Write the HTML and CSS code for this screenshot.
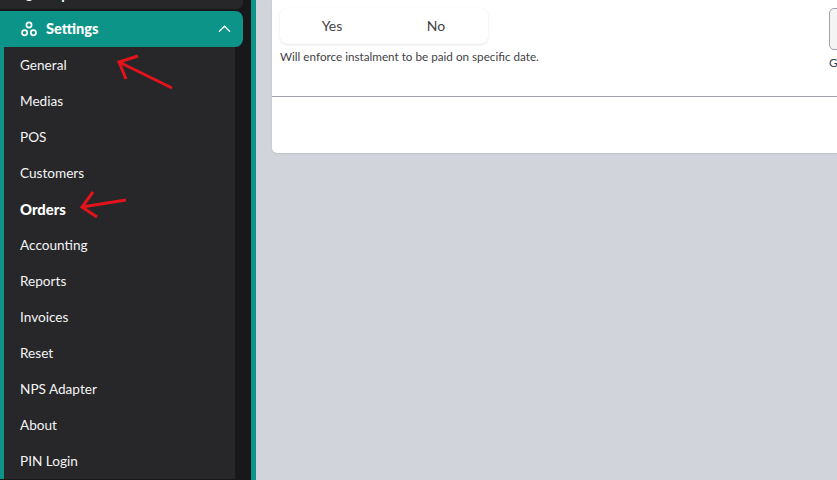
FILE: index.html
```html
<!DOCTYPE html>
<html lang="en">
<head>
<meta charset="UTF-8">
<meta name="viewport" content="width=device-width, initial-scale=1.0">
<title>Settings - Orders</title>
<link rel="stylesheet" href="styles.css">
</head>
<body>
<div class="layout">
    <aside class="sidebar">
        <div class="menu-prev">
            <svg class="menu-prev__icon" viewBox="0 0 16 16" fill="none" stroke="#fff" stroke-width="1.6">
                <circle cx="8" cy="8" r="6"/>
            </svg>
            <span class="menu-prev__label">Expenses</span>
        </div>
        <div class="menu-active">
            <svg class="menu-active__icon" viewBox="0 0 16 16" fill="none" stroke="#fff" stroke-width="1.7">
                <circle cx="8" cy="4" r="2.6"/>
                <circle cx="3.6" cy="11.8" r="2.6"/>
                <circle cx="12.4" cy="11.8" r="2.6"/>
            </svg>
            <span class="menu-active__label">Settings</span>
            <svg class="menu-active__chevron" viewBox="0 0 14 8" fill="none" stroke="#fff" stroke-width="1.3">
                <path d="M1 7l6-6 6 6"/>
            </svg>
        </div>
        <ul class="submenu">
            <li>General</li>
            <li>Medias</li>
            <li>POS</li>
            <li>Customers</li>
            <li class="current">Orders</li>
            <li>Accounting</li>
            <li>Reports</li>
            <li>Invoices</li>
            <li>Reset</li>
            <li>NPS Adapter</li>
            <li>About</li>
            <li>PIN Login</li>
        </ul>
    </aside>
    <main class="content">
        <section class="card">
            <div class="card__fields">
                <div class="field">
                    <div class="switch">
                        <span>Yes</span>
                        <span>No</span>
                    </div>
                    <p class="field__hint">Will enforce instalment to be paid on specific date.</p>
                </div>
                <div class="field field--cut">
                    <div class="input-box"></div>
                    <p class="field__hint">Gateway</p>
                </div>
            </div>
            <div class="card__footer"></div>
        </section>
    </main>
</div>
<svg class="arrow arrow--general" viewBox="0 0 62 40" fill="none" stroke="#e3131b" stroke-width="3">
    <path d="M57 36L4 10M23 4L4 10l7 17"/>
</svg>
<svg class="arrow arrow--orders" viewBox="0 0 52 33" fill="none" stroke="#e3131b" stroke-width="3">
    <path d="M48 12L4 19M15 4L4 19l15 10"/>
</svg>
</body>
</html>
```

FILE: styles.css
```css
* {
    box-sizing: border-box;
}
body {
    margin: 0;
    height: 480px;
    overflow: hidden;
    font-family: Lato, Arial, sans-serif;
    background-color: #d1d5db;
}
.layout {
    display: flex;
    height: 480px;
}
.sidebar {
    width: 256px;
    flex-shrink: 0;
    overflow: hidden;
    background-color: #18181b;
    border-right: 5px solid #0d9488;
}
.menu-prev {
    height: 9px;
    width: 243px;
    background-color: #27272a;
    border-bottom-right-radius: 6px;
    overflow: hidden;
    display: flex;
    align-items: flex-end;
    padding-left: 23px;
}
.menu-prev__icon {
    width: 12px;
    height: 12px;
    flex-shrink: 0;
    margin-bottom: 7px;
}
.menu-prev__label {
    color: #fff;
    font-weight: 700;
    font-size: 14px;
    line-height: 14px;
    flex-shrink: 0;
    margin-left: 11px;
    margin-bottom: 7px;
}
.menu-active {
    display: flex;
    align-items: center;
    width: 243px;
    height: 36px;
    margin-top: 2px;
    padding: 0 12px 0 21px;
    background-color: #0d9488;
    border-radius: 0 8px 8px 0;
}
.menu-active__icon {
    width: 16px;
    height: 16px;
}
.menu-active__label {
    margin-left: 9px;
    margin-bottom: 1px;
    color: #fff;
    font-weight: 900;
    font-size: 14.6px;
}
.menu-active__chevron {
    margin-left: auto;
    width: 13px;
    height: 8px;
}
.submenu {
    list-style: none;
    margin: 0;
    padding: 0;
    width: 235px;
    height: 432px;
    background-color: #27272a;
    border-left: 4px solid #0d9488;
}
.submenu li {
    height: 36px;
    line-height: 36px;
    padding-left: 16px;
    color: #f4f4f5;
    font-size: 13.6px;
}
.submenu li.current {
    color: #fff;
    font-weight: 900;
    font-size: 14.8px;
}
.content {
    flex: 1;
    min-width: 0;
    padding-left: 16px;
    overflow: hidden;
}
.card {
    height: 153px;
    background-color: #fff;
    border-radius: 0 0 0 5px;
    box-shadow: 0 1px 2px rgba(0, 0, 0, 0.1);
    display: flex;
    flex-direction: column;
}
.card__fields {
    height: 97px;
    flex-shrink: 0;
    display: flex;
    justify-content: space-between;
    padding: 8px 0 0 8px;
    border-bottom: 1px solid #a1a1aa;
}
.field--cut {
    width: 8px;
    overflow: hidden;
    flex-shrink: 0;
}
.switch {
    display: flex;
    width: 208px;
    height: 36px;
    border-radius: 8px;
    background-color: #fff;
    box-shadow: 0 1px 3px rgba(0, 0, 0, 0.1);
}
.switch span {
    width: 50%;
    text-align: center;
    line-height: 36px;
    font-size: 14px;
    color: #3f3f46;
}
.field__hint {
    margin: 4px 0 0;
    font-size: 11.7px;
    line-height: 16px;
    color: #3f3f46;
    white-space: nowrap;
}
.input-box {
    width: 20px;
    height: 42px;
    border: 1px solid #a1a1aa;
    border-radius: 5px;
    background-color: #f4f4f5;
}
.arrow {
    position: absolute;
}
.arrow--general {
    left: 115px;
    top: 52px;
    width: 62px;
    height: 40px;
}
.arrow--orders {
    left: 78px;
    top: 188px;
    width: 52px;
    height: 33px;
}
```
